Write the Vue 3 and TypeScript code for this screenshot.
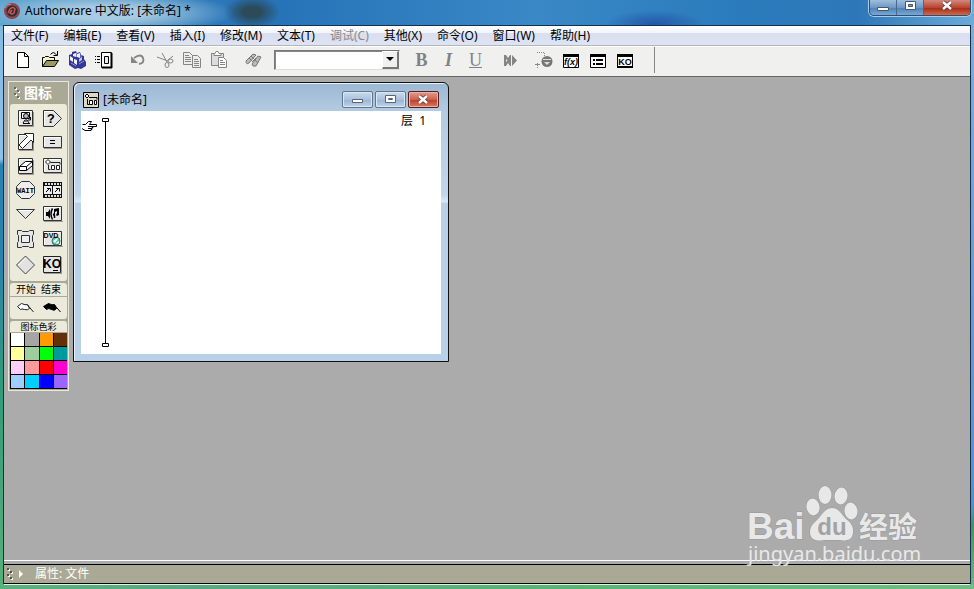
<script setup lang="ts">
import { ref } from 'vue'

interface Tool {
  name: string
  art: string
}

const menus: string[] = [
  '文件(F)', '编辑(E)', '查看(V)', '插入(I)', '修改(M)', '文本(T)',
  '调试(C)', '其他(X)', '命令(O)', '窗口(W)', '帮助(H)',
]

const fileTools: Tool[] = [
  {
    name: '新建',
    art: '<path d="M4.5 2.5h7l4 4v11h-11z" fill="#fff" stroke="#000"/><path d="M11.5 2.5v4h4M15.5 7v11M4 17.5h12" fill="none" stroke="#000"/>',
  },
  {
    name: '打开',
    art: '<path d="M2.5 16.5v-9h2l1-1h3l1 1h5v3" fill="#f4f4c8" stroke="#000"/><path d="M2.5 16.5l4-6h12l-4 6z" fill="#9a9a5c" stroke="#000"/><path d="M10.5 4.5q3-4 6 .5M17.5 1v4.5h-4" fill="none" stroke="#000"/>',
  },
  {
    name: '全部保存',
    art: '<path d="M2 5l3-1v-2l4-1 1 2 3-1 1 3 3 1v3l2 3v4l-5 3-3-1-3 1-6-4z" fill="#35369a"/><path d="M3 6l3 2v4l-3-2zM6 4l3-1v4l-3-1zM10 4l3-1v5l-3-1zM7 9l3 1v5l-3-2z" fill="#f0f1fb"/><path d="M12 9l3-2v3l-3 2z" fill="#c4c6ea"/><path d="M4 13l5 3M12 14l5-3M9.500 2v5M14 5v3" stroke="#8d8fd2"/>',
  },
  {
    name: '导入',
    art: '<path d="M7.500 2.500h10v15h-10z" fill="#fff" stroke="#000"/><path d="M17.500 3v15M8 17.500h10" stroke="#000" stroke-width="2"/><path d="M10.500 6.500h4v7h-4z" fill="#eee" stroke="#000"/><path d="M1 6.500h1M3 6.500h3M1 9.500h1M3 9.500h3M1 12.500h1M3 12.500h3" stroke="#000"/>',
  },
]

const editTools: Tool[] = [
  { name: '撤消', art: '<path d="M6 8q7-5 9 0t-4 6" fill="none" stroke="#858585" stroke-width="2"/><path d="M3 6v7h7z" fill="#858585"/>' },
  { name: '剪切', art: '<g fill="none" stroke="#858585"><path d="M2 7l11 4M7 3l5 9M13 10l5-4"/><ellipse cx="15.500" cy="11" rx="2.500" ry="2"/><ellipse cx="12" cy="15" rx="2" ry="2.500"/></g>' },
  { name: '复制', art: '<g fill="#eee" stroke="#858585"><path d="M1.500 2.500h6l3 3v9h-9zM10.500 5.500h5l3 3v9h-8z"/><path d="M3 5.500h4M3 7.500h6M3 9.500h6M3 11.500h6M12 9.500h4M12 11.500h5M12 13.500h5M12 15.500h5"/></g>' },
  { name: '粘贴', art: '<g fill="#ddd" stroke="#858585"><path d="M2.500 3.500h12v12h-12z"/><path d="M5 5.500h7v-2h-2l-1-2h-2l-1 2h-1z" fill="#fff"/><path d="M9.500 7.500h5l3 3v7h-8z" fill="#fff"/><path d="M11 10.500h3M11 12.500h5M11 14.500h5"/></g>' },
]

const findTool: Tool = {
  name: '查找',
  art: '<g fill="#bbb" stroke="#777"><path d="M3 11l7-7 3 1-7 8q-3 2-3-2z"/><path d="M9 14l6-8 3 1-5 9q-4 1-4-2z"/><path d="M6 8l3 3M8 6l3 3M12 10l3 3M9 12l4-4"/></g>',
}

const runTool: Tool = {
  name: '运行',
  art: '<path d="M4 5h2l2 3 2-3h1v11h-1l-2-3-2 3h-2z" fill="#858585"/><path d="M6 9l1.500 1.500L6 12z" fill="#f0f0ef"/><path d="M12 5l5 5.500-5 5.500z" fill="#858585"/>',
}

const panelTools: Tool[] = [
  {
    name: '控制面板',
    art: '<path d="M3 2.500h8M3.500 13v5M10.500 3v3" fill="none" stroke="#888" stroke-dasharray="1 1"/><path d="M1 14.500h5" stroke="#888"/><circle cx="13" cy="11.500" r="5.500" fill="#777"/><path d="M9 9.500h8" stroke="#ddd"/><path d="M10 12h6l-3 3z" fill="#ddd"/>',
  },
  {
    name: '函数',
    art: '<path d="M2.500 4.500h15v13h-15z" fill="#fff" stroke="#000"/><path d="M2 5.500h16" stroke="#000" stroke-width="3"/><text x="10" y="15" text-anchor="middle" font-size="9" font-weight="700" font-style="italic" font-family="Liberation Sans, sans-serif">f(x)</text>',
  },
  {
    name: '变量',
    art: '<path d="M2.500 4.500h15v13h-15z" fill="#fff" stroke="#000"/><path d="M2 5.500h16" stroke="#000" stroke-width="3"/><path d="M5 9h2v2h-2zM5 13h2v2h-2zM8 9h7v2h-7zM8 13h7v2h-7z"/>',
  },
  {
    name: '知识对象',
    art: '<path d="M2 4h16v14h-16z"/><path d="M3 7h14v9h-14z" fill="#fff"/><text x="10" y="15" text-anchor="middle" font-size="9" font-weight="700" font-family="Liberation Sans, sans-serif">KO</text>',
  },
]

// Raised plate shared by the square flow icons
const plate = '<path d="M3.500 2.500h14v15h-14z" fill="#e6e6e6" stroke="#333"/><path d="M4.500 16.500v-13h12" fill="none" stroke="#fff"/><path d="M4 18.500h15M18.500 4v15" stroke="#999"/>'
const widePlate = '<path d="M1.500 2.500h18v14h-18z" fill="#e6e6e6" stroke="#333"/><path d="M2.500 15.500v-12h16" fill="none" stroke="#fff"/><path d="M2 17.500h19" stroke="#999"/>'

const flowIcons: Tool[] = [
  { name: '显示', art: plate + '<path d="M6.500 4.500h8v6h-8z" fill="#fff" stroke="#000"/><circle cx="11" cy="8" r="2.500" fill="#bbb" stroke="#000"/><path d="M8 15.500h7M10 12l-2 3M12 12l2 3M11 11v3M13 12h2.500v-3" fill="none" stroke="#000"/>' },
  { name: '判断', art: '<path d="M1.500 2.500h10l8 8-8 8h-10z" fill="#e6e6e6" stroke="#333"/><path d="M2.500 17v-13.500h8" fill="none" stroke="#fff"/><text x="9" y="15" text-anchor="middle" font-size="13" font-weight="700" font-family="Liberation Mono, monospace">?</text>' },
  { name: '移动', art: plate + '<path d="M9.500 1.500h9v9l-2.500-2.500-8.500 8.500-3.500-3.500 8.500-8.500z" fill="#fff" stroke="#222"/>' },
  { name: '计算', art: '<path d="M1.500 4.500h18v11h-18z" fill="#e6e6e6" stroke="#333"/><path d="M2.500 14v-8.500h16" fill="none" stroke="#fff"/><path d="M8 8.500h5M8 11.500h5" stroke="#000"/><path d="M2 16.500h18" stroke="#999"/>' },
  { name: '擦除', art: plate + '<path d="M4.500 10.500l6-5h7v4l-6 5h-7z" fill="#fff" stroke="#000"/><path d="M4.500 10.500h7l6-5M11.500 10.500v4" fill="none" stroke="#000"/>' },
  { name: '群组', art: widePlate + '<path d="M6 3.500l2.500 2.500-2.500 2.500-2.500-2.500z" fill="#fff" stroke="#222"/><path d="M8.500 6.500h9.500v2M6.500 9v4.500h2" fill="none" stroke="#222"/><path d="M9.500 9.500h3v4h-3zM14.500 9.500h3v4h-3z" fill="#fff" stroke="#222"/>' },
  { name: '等待', art: '<path d="M6.500 1.500h8l5 5v7l-5 5h-8l-5-5v-7z" fill="#eee" stroke="#333"/><text x="10.500" y="13" text-anchor="middle" font-size="7" font-weight="700" font-family="Liberation Mono, monospace">WAIT</text>' },
  { name: '电影', art: '<path d="M1 2h19v16h-19z" fill="#111"/><path d="M2 6h8v8h-8zM11 6h8v8h-8z" fill="#eee"/><path d="M3 4h16M3 16h16" stroke="#ddd" stroke-width="2" stroke-dasharray="2 1"/><path d="M4 12l4-4M5 8.500h3.500v3M13 12l4-4M14 8.500h3.500v3" fill="none" stroke="#000"/>' },
  { name: '导航', art: '<path d="M1.500 5.500h18l-9 9z" fill="#e6e6e6" stroke="#333"/><path d="M4 6.500h13" stroke="#fff"/>' },
  { name: '声音', art: widePlate + '<path d="M4 8h2l2-3v10l-2-3h-2z"/><path d="M10.500 4.500q-3 5 0 11M12.500 11v3" fill="none" stroke="#000" stroke-width="1.500"/><path d="M12 5l5-1v7l-2 1-1-1 1-2v-2l-2 1v3l-2 1v-2l1-1z"/>' },
  { name: '框架', art: '<path d="M2.500 1.500h4l1 1h6l1-1h4v4l-1 1v6l1 1v5h-4l-1-1h-6l-1 1h-4v-5l1-1v-6l-1-1z" fill="#e6e6e6" stroke="#333"/><path d="M6.500 6.500h8v7h-8z" fill="#eee" stroke="#333"/>' },
  { name: 'DVD', art: widePlate + '<circle cx="14" cy="12" r="4" fill="#57c79e" stroke="#247a64"/><path d="M11 12l4-3 1 1-3 4zM14 14l3-2v2l-2 1z" fill="#fff"/><text x="9" y="9" text-anchor="middle" font-size="7" font-weight="700" font-family="Liberation Sans, sans-serif">DVD</text>' },
  { name: '交互', art: '<path d="M10.500 1l9 9-9 9-9-9z" fill="#e2e2e2" stroke="#444"/><path d="M3.500 10l7-7" stroke="#fff"/>' },
  { name: '知识对象', art: '<path d="M1.500 1.500h17v16h-17z" fill="#e6e6e6" stroke="#222"/><path d="M2 18.500h18M19.500 2v17" stroke="#999"/><text x="10" y="13" text-anchor="middle" font-size="12" font-weight="700" font-family="Liberation Sans, sans-serif">KO</text><path d="M11 15.500h5" stroke="#000"/>' },
]

const swatches: string[] = [
  '#ffffff', '#a5a5a5', '#ff9a00', '#633008',
  '#ffff9c', '#9ccf9c', '#00ff08', '#009a9c',
  '#ffcff7', '#ff9a9c', '#ff0000', '#ff00ce',
  '#9ccfff', '#00cfff', '#0000ff', '#9c65ff',
]

const textStyle = ref('')
</script>

<template>
  <div class="frame">
    <header class="titlebar">
      <svg class="app-icon" viewBox="0 0 18 18" aria-hidden="true">
        <circle cx="9" cy="9" r="8" fill="#8d4550" />
        <circle cx="9" cy="9" r="5.500" fill="#292c33" />
        <path d="M5 11l2-4q3-3 5 0l-1 4q-2 2-4 0l2-3" fill="none" stroke="#c55" stroke-width="1.500" />
        <path d="M2 6q2-4 6-4" fill="none" stroke="#d68a91" />
      </svg>
      <h1>Authorware 中文版: [未命名] *</h1>
      <div class="controls">
        <button type="button" aria-label="最小化">
          <svg viewBox="0 0 20 15"><path d="M4.500 7.500h11v3h-11z" fill="#fff" stroke="#47566b" /></svg>
        </button>
        <button type="button" aria-label="最大化">
          <svg viewBox="0 0 20 15"><path d="M5.500 1.500h10v8h-10z" fill="#fff" stroke="#47566b" /><path d="M8.500 4.500h4v2h-4z" fill="#7b9bc0" stroke="#47566b" /></svg>
        </button>
        <button type="button" class="close" aria-label="关闭">
          <svg viewBox="0 0 20 15"><path d="M6 2l8 7M14 2l-8 7" stroke="#5b3535" stroke-width="4" /><path d="M6 2l8 7M14 2l-8 7" stroke="#fff" stroke-width="2.500" /></svg>
        </button>
      </div>
    </header>

    <div class="client">
      <nav class="menubar">
        <button v-for="m in menus" :key="m" type="button" :disabled="m === '调试(C)'">{{ m }}</button>
      </nav>

      <div class="toolbar">
        <div class="group">
          <button v-for="t in fileTools" :key="t.name" type="button" :aria-label="t.name"><svg viewBox="0 0 21 20" v-html="t.art" /></button>
        </div>
        <div class="group">
          <button v-for="t in editTools" :key="t.name" type="button" :aria-label="t.name"><svg viewBox="0 0 21 20" v-html="t.art" /></button>
        </div>
        <div class="group">
          <button type="button" :aria-label="findTool.name"><svg viewBox="0 0 21 20" v-html="findTool.art" /></button>
        </div>
        <div class="combo">
          <select v-model="textStyle" aria-label="文本样式"><option value=""></option></select>
          <span class="drop"><svg viewBox="0 0 8 5"><path d="M0 0h8L4 4z" /></svg></span>
        </div>
        <div class="group letters">
          <button type="button" class="bold">B</button>
          <button type="button" class="italic">I</button>
          <button type="button" class="under">U</button>
        </div>
        <div class="group">
          <button type="button" :aria-label="runTool.name"><svg viewBox="0 0 21 20" v-html="runTool.art" /></button>
        </div>
        <div class="group">
          <button v-for="t in panelTools" :key="t.name" type="button" :aria-label="t.name"><svg viewBox="0 0 21 20" v-html="t.art" /></button>
        </div>
        <span class="divider"></span>
      </div>

      <main class="workspace">
        <aside class="palette">
          <h2>
            <svg class="grip" viewBox="0 0 6 14"><path d="M0 1h2v2H0zM3 4h2v2H3zM0 7h2v2H0zM3 10h2v2H3z" fill="#6c6b5e" /><path d="M2 2h1v2H1V3h1zM5 5h1v2H4V6h1zM2 8h1v2H1V9h1zM5 11h1v2H4v-1h1z" fill="#fff" /></svg>
            图标
          </h2>
          <div class="box flow">
            <button v-for="t in flowIcons" :key="t.name" type="button" :aria-label="t.name"><svg viewBox="0 0 21 20" v-html="t.art" /></button>
          </div>
          <div class="box flags">
            <div class="caption"><span>开始</span><span>结束</span></div>
            <div class="pair">
              <button type="button" aria-label="开始标志"><svg viewBox="0 0 21 14"><path d="M2.500 5.500l4-3q4 2 6 1l2 4q-2 2-5 1t-4 0z" fill="#fff" stroke="#222" /><path d="M12.500 4l6 7" stroke="#222" /></svg></button>
              <button type="button" aria-label="结束标志"><svg viewBox="0 0 21 14"><path d="M1.500 5.500l5-3q4 2 6 1l2 4q-2 3-5 1t-5 0z" stroke="#000" /><path d="M12.500 4l6 7" stroke="#000" /></svg></button>
            </div>
          </div>
          <div class="box colors">
            <div class="caption small">图标色彩</div>
            <div class="swatches">
              <button v-for="c in swatches" :key="c" type="button" :aria-label="c" :style="{ backgroundColor: c }"></button>
            </div>
          </div>
        </aside>

        <section class="design">
          <header>
            <svg class="doc" viewBox="0 0 16 16"><path d="M.5.5h15v15H.5z" fill="#ddd9c5" stroke="#000" /><path d="M4 2l2 2-2 2-2-2z" fill="#fff" stroke="#000" /><path d="M6 5.500h8v2M4.500 7v5.500h2" fill="none" stroke="#000" /><path d="M6.500 8.500h3v4h-3zM11.500 8.500h2v4h-2z" fill="#fff" stroke="#000" /></svg>
            <h2>[未命名]</h2>
            <button type="button" aria-label="最小化"><svg viewBox="0 0 21 15"><path d="M5.500 7.500h10v3h-10z" fill="#fff" stroke="#596574" /></svg></button>
            <button type="button" aria-label="最大化"><svg viewBox="0 0 21 15"><path d="M5.500 3.500h10v7h-10z" fill="#fff" stroke="#596574" /><path d="M8.500 6.500h4v1h-4z" fill="none" stroke="#596574" /></svg></button>
            <button type="button" class="close" aria-label="关闭"><svg viewBox="0 0 21 15"><path d="M6 4l8 7M14 4l-8 7" stroke="#5b3535" stroke-width="4" /><path d="M6 4l8 7M14 4l-8 7" stroke="#fff" stroke-width="2.500" /></svg></button>
          </header>
          <div class="sheet">
            <svg class="flowline" viewBox="0 0 32 236" aria-hidden="true">
              <path d="M24.500 8v222" stroke="#000" />
              <path d="M21.500 5.500h6v3h-6zM21.500 230.500h6v3h-6z" fill="#fff" stroke="#000" />
              <path d="M1.500 11.500h3l3-3h3l-2 3h7v2h-6M1 15.500l3 2h6v-1h1v-2h1v-1M7 13.500h4M7 15.500h4" fill="none" stroke="#000" />
            </svg>
            <span class="level">层&nbsp; 1</span>
          </div>
        </section>

        <div class="watermark">
          <svg viewBox="0 0 180 90">
            <g fill="#e8e8e8" stroke="#989898" stroke-width="1" paint-order="stroke">
              <text x="3" y="58" font-size="37" font-weight="700" font-family="Liberation Sans, sans-serif">Bai</text>
              <ellipse cx="69" cy="26" rx="6.500" ry="8.500" transform="rotate(-10 69 26)" />
              <ellipse cx="81" cy="14" rx="6.500" ry="9" />
              <ellipse cx="97" cy="15" rx="6.500" ry="8.500" transform="rotate(8 97 15)" />
              <ellipse cx="107" cy="30" rx="6.500" ry="8.500" transform="rotate(-8 107 30)" />
              <path d="M88 27c7 0 9 6 14 11 5 4 8 8 7 14-1 8-8 8-14 7h-15c-8 2-14-1-14-8 0-6 4-9 8-13s7-11 14-11z" />
              <text x="115" y="57" font-size="29" font-weight="700" font-family="Noto Sans CJK SC, sans-serif">经验</text>
              <text x="4" y="80" font-size="20" stroke="none" font-family="Noto Sans, sans-serif">jingyan.baidu.com</text>
            </g>
            <text x="88" y="54" text-anchor="middle" font-size="24" font-weight="700" fill="#a2a2a2" font-family="Liberation Sans, sans-serif">du</text>
          </svg>
        </div>
      </main>

      <footer class="properties">
        <svg class="grip" viewBox="0 0 6 14"><path d="M0 1h2v2H0zM3 4h2v2H3zM0 7h2v2H0zM3 10h2v2H3z" fill="#55554a" /><path d="M2 2h1v2H1V3h1zM5 5h1v2H4V6h1zM2 8h1v2H1V9h1zM5 11h1v2H4v-1h1z" fill="#fff" /></svg>
        <button type="button"><svg viewBox="0 0 4 8"><path d="M0 0l4 4-4 4z" fill="#fff" /></svg>属性: 文件</button>
      </footer>
    </div>
  </div>
</template>

<style>
body {
  margin: 0;
}
</style>

<style scoped>
.frame {
  box-sizing: border-box;
  display: flex;
  flex-direction: column;
  min-height: 100vh;
  padding: 0 3px 4px 3px;
  font: 12px/16px "Noto Sans", "Noto Sans CJK SC", sans-serif;
  color: #000;
  background:
    radial-gradient(ellipse 28px 16px at 252px 12px, #2c4a58 30%, transparent) no-repeat,
    radial-gradient(ellipse 130px 22px at 105px 13px, #a6cbe2 30%, transparent) no-repeat,
    radial-gradient(ellipse 50px 14px at 655px 24px, #2357a8, transparent) no-repeat,
    linear-gradient(90deg, #5ba1cd, #2471b6 26%, #3a88c6 55%, #2b7cbc 75%, #2d77b8 88%, #6cabd8) top / 100% 26px no-repeat,
    linear-gradient(90deg, #58b27c, #57a882 20%, #58b673 60%, #6ebd84) bottom / 100% 5px no-repeat,
    linear-gradient(#7fb9e0, #8ec2e8 27%, #2583b4 28%, #2b83ac 45%, #2f9c79 65%, #57b07b) left / 50% 100% no-repeat,
    linear-gradient(#79b1dc, #4e93d0 86%, #3d9663 89%, #69bb7e) right / 50% 100% no-repeat;
}

button {
  padding: 0;
  border: 0;
  background: none;
  font: inherit;
  color: inherit;
}

svg {
  display: block;
}

h1,
h2 {
  margin: 0;
  font-size: 12px;
  font-weight: 400;
}

.titlebar {
  display: flex;
  align-items: flex-start;
  height: 25px;
}

.app-icon {
  width: 18px;
  height: 18px;
  margin-top: 2px;
}

.titlebar h1 {
  margin: 3px 0 0 4px;
}

.controls {
  display: flex;
  margin-left: auto;
  border: 1px solid #314d70;
  border-top: 0;
  border-radius: 0 0 5px 5px;
  box-shadow: 0 0 0 1px #a9cce8;
  overflow: hidden;
}

.controls button {
  display: grid;
  place-items: center;
  width: 27px;
  height: 15px;
  border-right: 1px solid #47678c;
  background: linear-gradient(#9fbedc, #6d98c5 50%, #4a7fb6 51%, #78a8d4);
}

.controls button.close {
  width: 46px;
  border-right: 0;
  background: linear-gradient(#d3897c, #b9452f 50%, #a32813 51%, #cf6a4c);
}

.controls svg {
  width: 20px;
  height: 15px;
}

.client {
  flex: 1;
  display: flex;
  flex-direction: column;
  border: 1px solid #14304c;
  border-bottom-color: #e4f3e8;
}

.menubar {
  display: flex;
  gap: 1px;
  height: 19px;
  border-bottom: 1px solid #b4b6bd;
  background: linear-gradient(#fff, #f2f4fa 35%, #d9def0 40%, #dfe4f3);
}

.menubar button {
  padding: 0 7px;
  line-height: 19px;
  white-space: nowrap;
}

.menubar button:disabled {
  color: #888;
}

.toolbar {
  display: flex;
  align-items: center;
  gap: 7px;
  height: 26px;
  padding: 0 6px 3px;
  border-top: 1px solid #fff;
  border-bottom: 1px solid #666;
  background: #f0f0ef;
}

.group {
  display: flex;
}

.group button {
  display: grid;
  place-items: center;
  width: 27px;
  height: 24px;
}

.group svg {
  width: 21px;
  height: 20px;
}

.letters {
  padding: 0 1px;
}

.letters button {
  font: 18px/24px "Liberation Serif", serif;
  color: #828282;
}

.letters .bold {
  font-weight: 700;
}

.letters .italic {
  font-style: italic;
  font-weight: 700;
}

.letters .under {
  text-decoration: underline;
}

.combo {
  display: grid;
  grid-template-columns: 1fr 17px;
  box-sizing: border-box;
  width: 126px;
  height: 20px;
  border: 1px solid #777;
  border-right-color: #eee;
  border-bottom-color: #ddd;
}

.combo select {
  grid-area: 1 / 1 / 2 / 3;
  min-width: 0;
  height: 18px;
  padding: 0 18px 0 4px;
  border: 0;
  border-top: 1px solid #888;
  border-left: 1px solid #888;
  border-radius: 0;
  appearance: none;
  background: #fff;
  font: inherit;
}

.drop {
  grid-area: 1 / 2 / 2 / 3;
  display: grid;
  place-items: center;
  border: 1px solid #fff;
  border-right: 2px solid #777;
  border-bottom: 2px solid #777;
  background: #f0f0f0;
  pointer-events: none;
}

.drop svg {
  width: 8px;
  height: 5px;
}

.divider {
  width: 1px;
  height: 26px;
  margin-left: 8px;
  background: #888;
}

.workspace {
  position: relative;
  flex: 1;
  display: flex;
  align-items: flex-start;
  gap: 4px;
  padding: 4px;
  background: #ababab;
}

.palette {
  box-sizing: border-box;
  flex: none;
  width: 61px;
  padding: 0 1px 1px;
  border: 1px solid #e9e8da;
  background: #a9a995;
}

.palette h2 {
  display: flex;
  align-items: center;
  gap: 4px;
  height: 22px;
  padding-left: 4px;
  font-size: 14px;
  font-weight: 700;
  color: #fff;
}

.grip {
  flex: none;
  width: 6px;
  height: 14px;
}

.box {
  margin-bottom: 2px;
  border-radius: 3px;
  background: #ecebdb;
}

.flow {
  display: grid;
  grid-template-columns: 27px 27px;
  grid-template-rows: repeat(5, 24px) 26px 26px;
  padding: 2px 1px 3px 2px;
}

.flow button,
.pair button {
  display: grid;
  place-items: center;
}

.flow svg {
  width: 21px;
  height: 20px;
}

.caption {
  display: flex;
  justify-content: center;
  gap: 5px;
  height: 13px;
  border-bottom: 1px solid #aaa995;
  font-size: 10px;
  line-height: 13px;
}

.caption.small {
  height: 11px;
  font-size: 9px;
  line-height: 11px;
}

.pair {
  display: grid;
  grid-template-columns: 27px 27px;
  height: 22px;
  padding-left: 2px;
}

.pair svg {
  width: 21px;
  height: 14px;
}

.colors {
  margin: 0;
}

.swatches {
  display: grid;
  grid-template-columns: repeat(4, 1fr);
  grid-auto-rows: 13px;
  gap: 1px;
  padding: 0 0 1px 1px;
  background: #000;
}

.design {
  box-sizing: border-box;
  width: 376px;
  margin-top: 1px;
  padding: 0 7px 7px;
  border: 1px solid #111;
  border-radius: 6px 6px 0 0;
  background: linear-gradient(#9db8d3, #b3cbe2 28px, #c0d6ec 112px, #dceafa 119px, #b9d1e8 120px);
  box-shadow: inset 1px 1px #e7f1fa;
}

.design header {
  display: flex;
  align-items: center;
  height: 28px;
  padding: 5px 2px 0;
  box-sizing: border-box;
}

.doc {
  width: 16px;
  height: 16px;
}

.design h2 {
  flex: 1;
  padding-left: 4px;
}

.design header button {
  display: grid;
  place-items: center;
  box-sizing: border-box;
  width: 31px;
  height: 17px;
  margin-left: 2px;
  border: 1px solid #5d7590;
  border-radius: 2px;
  background: linear-gradient(#cbdced, #a9c1da 50%, #99b4d0 51%, #bfd3e8);
  box-shadow: inset 0 0 0 1px #dbe8f4;
}

.design header button svg {
  width: 21px;
  height: 15px;
}

.design header button.close {
  border-color: #541e1b;
  background: linear-gradient(#e39d90, #cd604c 50%, #b93d28 51%, #d97a61);
  box-shadow: inset 0 0 0 1px #eab3a8;
}

.sheet {
  display: flex;
  justify-content: space-between;
  height: 243px;
  background: #fff;
}

.flowline {
  width: 32px;
  height: 236px;
  margin-top: 2px;
}

.level {
  padding: 2px 15px 0 0;
}

.watermark {
  position: absolute;
  right: 46px;
  bottom: -7px;
  z-index: 1;
  pointer-events: none;
}

.watermark svg {
  width: 180px;
  height: 90px;
}

.properties {
  position: relative;
  display: flex;
  align-items: center;
  gap: 6px;
  height: 18px;
  padding-left: 3px;
  border-top: 1px solid #000;
  border-bottom: 1px solid #000;
  background: #aaa995;
  box-shadow: 0 -3px #ababab, 0 -4px #fff;
  color: #fff;
}

.properties button {
  display: flex;
  align-items: center;
  gap: 12px;
}

.properties button svg {
  width: 4px;
  height: 8px;
}
</style>
